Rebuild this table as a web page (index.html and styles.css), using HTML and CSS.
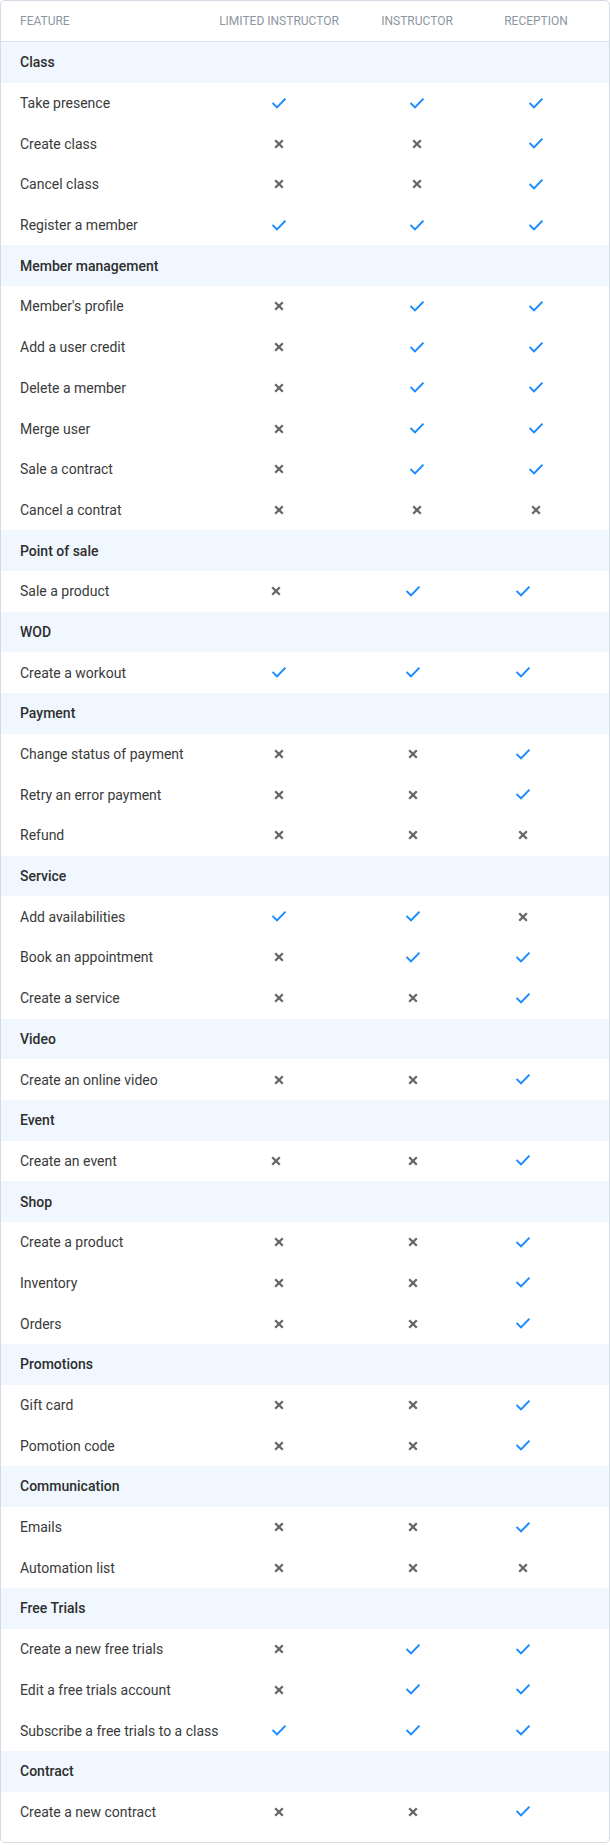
FILE: index.html
```html
<!DOCTYPE html>
<html lang="en">
<head>
<meta charset="utf-8">
<title>Permissions</title>
<link rel="stylesheet" href="styles.css">
</head>
<body>
<svg class="defs" width="0" height="0" aria-hidden="true">
  <symbol id="i-yes" viewBox="0 0 14 11"><path d="M1.2 5.6 L5 9.4 L12.8 1.4" fill="none" stroke="currentColor" stroke-width="2" stroke-linecap="square" stroke-linejoin="miter"/></symbol>
  <symbol id="i-no" viewBox="0 0 10 10"><path d="M1.2 1.2 L8.8 8.8 M8.8 1.2 L1.2 8.8" fill="none" stroke="currentColor" stroke-width="2.3"/></symbol>
</svg>
<div class="perm">
  <div class="row row--head grid-a">
    <span class="feature">Feature</span>
    <span class="cell">Limited instructor</span>
    <span class="cell">Instructor</span>
    <span class="cell">Reception</span>
  </div>

  <div class="group grid-a">
    <div class="band">Class</div>
    <div class="row"><span class="feature">Take presence</span><span class="cell"><svg class="ic yes"><use href="#i-yes"/></svg></span><span class="cell"><svg class="ic yes"><use href="#i-yes"/></svg></span><span class="cell"><svg class="ic yes"><use href="#i-yes"/></svg></span></div>
    <div class="row"><span class="feature">Create class</span><span class="cell"><svg class="ic no"><use href="#i-no"/></svg></span><span class="cell"><svg class="ic no"><use href="#i-no"/></svg></span><span class="cell"><svg class="ic yes"><use href="#i-yes"/></svg></span></div>
    <div class="row"><span class="feature">Cancel class</span><span class="cell"><svg class="ic no"><use href="#i-no"/></svg></span><span class="cell"><svg class="ic no"><use href="#i-no"/></svg></span><span class="cell"><svg class="ic yes"><use href="#i-yes"/></svg></span></div>
    <div class="row"><span class="feature">Register a member</span><span class="cell"><svg class="ic yes"><use href="#i-yes"/></svg></span><span class="cell"><svg class="ic yes"><use href="#i-yes"/></svg></span><span class="cell"><svg class="ic yes"><use href="#i-yes"/></svg></span></div>
  </div>

  <div class="group grid-a">
    <div class="band">Member management</div>
    <div class="row"><span class="feature">Member's profile</span><span class="cell"><svg class="ic no"><use href="#i-no"/></svg></span><span class="cell"><svg class="ic yes"><use href="#i-yes"/></svg></span><span class="cell"><svg class="ic yes"><use href="#i-yes"/></svg></span></div>
    <div class="row"><span class="feature">Add a user credit</span><span class="cell"><svg class="ic no"><use href="#i-no"/></svg></span><span class="cell"><svg class="ic yes"><use href="#i-yes"/></svg></span><span class="cell"><svg class="ic yes"><use href="#i-yes"/></svg></span></div>
    <div class="row"><span class="feature">Delete a member</span><span class="cell"><svg class="ic no"><use href="#i-no"/></svg></span><span class="cell"><svg class="ic yes"><use href="#i-yes"/></svg></span><span class="cell"><svg class="ic yes"><use href="#i-yes"/></svg></span></div>
    <div class="row"><span class="feature">Merge user</span><span class="cell"><svg class="ic no"><use href="#i-no"/></svg></span><span class="cell"><svg class="ic yes"><use href="#i-yes"/></svg></span><span class="cell"><svg class="ic yes"><use href="#i-yes"/></svg></span></div>
    <div class="row"><span class="feature">Sale a contract</span><span class="cell"><svg class="ic no"><use href="#i-no"/></svg></span><span class="cell"><svg class="ic yes"><use href="#i-yes"/></svg></span><span class="cell"><svg class="ic yes"><use href="#i-yes"/></svg></span></div>
    <div class="row"><span class="feature">Cancel a contrat</span><span class="cell"><svg class="ic no"><use href="#i-no"/></svg></span><span class="cell"><svg class="ic no"><use href="#i-no"/></svg></span><span class="cell"><svg class="ic no"><use href="#i-no"/></svg></span></div>
  </div>

  <div class="group grid-b">
    <div class="band">Point of sale</div>
    <div class="row"><span class="feature">Sale a product</span><span class="cell"><svg class="ic no shift"><use href="#i-no"/></svg></span><span class="cell"><svg class="ic yes"><use href="#i-yes"/></svg></span><span class="cell"><svg class="ic yes"><use href="#i-yes"/></svg></span></div>
  </div>

  <div class="group grid-b">
    <div class="band">WOD</div>
    <div class="row"><span class="feature">Create a workout</span><span class="cell"><svg class="ic yes"><use href="#i-yes"/></svg></span><span class="cell"><svg class="ic yes"><use href="#i-yes"/></svg></span><span class="cell"><svg class="ic yes"><use href="#i-yes"/></svg></span></div>
  </div>

  <div class="group grid-b">
    <div class="band">Payment</div>
    <div class="row"><span class="feature">Change status of payment</span><span class="cell"><svg class="ic no"><use href="#i-no"/></svg></span><span class="cell"><svg class="ic no"><use href="#i-no"/></svg></span><span class="cell"><svg class="ic yes"><use href="#i-yes"/></svg></span></div>
    <div class="row"><span class="feature">Retry an error payment</span><span class="cell"><svg class="ic no"><use href="#i-no"/></svg></span><span class="cell"><svg class="ic no"><use href="#i-no"/></svg></span><span class="cell"><svg class="ic yes"><use href="#i-yes"/></svg></span></div>
    <div class="row"><span class="feature">Refund</span><span class="cell"><svg class="ic no"><use href="#i-no"/></svg></span><span class="cell"><svg class="ic no"><use href="#i-no"/></svg></span><span class="cell"><svg class="ic no"><use href="#i-no"/></svg></span></div>
  </div>

  <div class="group grid-b">
    <div class="band">Service</div>
    <div class="row"><span class="feature">Add availabilities</span><span class="cell"><svg class="ic yes"><use href="#i-yes"/></svg></span><span class="cell"><svg class="ic yes"><use href="#i-yes"/></svg></span><span class="cell"><svg class="ic no"><use href="#i-no"/></svg></span></div>
    <div class="row"><span class="feature">Book an appointment</span><span class="cell"><svg class="ic no"><use href="#i-no"/></svg></span><span class="cell"><svg class="ic yes"><use href="#i-yes"/></svg></span><span class="cell"><svg class="ic yes"><use href="#i-yes"/></svg></span></div>
    <div class="row"><span class="feature">Create a service</span><span class="cell"><svg class="ic no"><use href="#i-no"/></svg></span><span class="cell"><svg class="ic no"><use href="#i-no"/></svg></span><span class="cell"><svg class="ic yes"><use href="#i-yes"/></svg></span></div>
  </div>

  <div class="group grid-b">
    <div class="band">Video</div>
    <div class="row"><span class="feature">Create an online video</span><span class="cell"><svg class="ic no"><use href="#i-no"/></svg></span><span class="cell"><svg class="ic no"><use href="#i-no"/></svg></span><span class="cell"><svg class="ic yes"><use href="#i-yes"/></svg></span></div>
  </div>

  <div class="group grid-b">
    <div class="band">Event</div>
    <div class="row"><span class="feature">Create an event</span><span class="cell"><svg class="ic no shift"><use href="#i-no"/></svg></span><span class="cell"><svg class="ic no"><use href="#i-no"/></svg></span><span class="cell"><svg class="ic yes"><use href="#i-yes"/></svg></span></div>
  </div>

  <div class="group grid-b">
    <div class="band">Shop</div>
    <div class="row"><span class="feature">Create a product</span><span class="cell"><svg class="ic no"><use href="#i-no"/></svg></span><span class="cell"><svg class="ic no"><use href="#i-no"/></svg></span><span class="cell"><svg class="ic yes"><use href="#i-yes"/></svg></span></div>
    <div class="row"><span class="feature">Inventory</span><span class="cell"><svg class="ic no"><use href="#i-no"/></svg></span><span class="cell"><svg class="ic no"><use href="#i-no"/></svg></span><span class="cell"><svg class="ic yes"><use href="#i-yes"/></svg></span></div>
    <div class="row"><span class="feature">Orders</span><span class="cell"><svg class="ic no"><use href="#i-no"/></svg></span><span class="cell"><svg class="ic no"><use href="#i-no"/></svg></span><span class="cell"><svg class="ic yes"><use href="#i-yes"/></svg></span></div>
  </div>

  <div class="group grid-b">
    <div class="band">Promotions</div>
    <div class="row"><span class="feature">Gift card</span><span class="cell"><svg class="ic no"><use href="#i-no"/></svg></span><span class="cell"><svg class="ic no"><use href="#i-no"/></svg></span><span class="cell"><svg class="ic yes"><use href="#i-yes"/></svg></span></div>
    <div class="row"><span class="feature">Pomotion code</span><span class="cell"><svg class="ic no"><use href="#i-no"/></svg></span><span class="cell"><svg class="ic no"><use href="#i-no"/></svg></span><span class="cell"><svg class="ic yes"><use href="#i-yes"/></svg></span></div>
  </div>

  <div class="group grid-b">
    <div class="band">Communication</div>
    <div class="row"><span class="feature">Emails</span><span class="cell"><svg class="ic no"><use href="#i-no"/></svg></span><span class="cell"><svg class="ic no"><use href="#i-no"/></svg></span><span class="cell"><svg class="ic yes"><use href="#i-yes"/></svg></span></div>
    <div class="row"><span class="feature">Automation list</span><span class="cell"><svg class="ic no"><use href="#i-no"/></svg></span><span class="cell"><svg class="ic no"><use href="#i-no"/></svg></span><span class="cell"><svg class="ic no"><use href="#i-no"/></svg></span></div>
  </div>

  <div class="group grid-b">
    <div class="band">Free Trials</div>
    <div class="row"><span class="feature">Create a new free trials</span><span class="cell"><svg class="ic no"><use href="#i-no"/></svg></span><span class="cell"><svg class="ic yes"><use href="#i-yes"/></svg></span><span class="cell"><svg class="ic yes"><use href="#i-yes"/></svg></span></div>
    <div class="row"><span class="feature">Edit a free trials account</span><span class="cell"><svg class="ic no"><use href="#i-no"/></svg></span><span class="cell"><svg class="ic yes"><use href="#i-yes"/></svg></span><span class="cell"><svg class="ic yes"><use href="#i-yes"/></svg></span></div>
    <div class="row"><span class="feature">Subscribe a free trials to a class</span><span class="cell"><svg class="ic yes"><use href="#i-yes"/></svg></span><span class="cell"><svg class="ic yes"><use href="#i-yes"/></svg></span><span class="cell"><svg class="ic yes"><use href="#i-yes"/></svg></span></div>
  </div>

  <div class="group grid-b">
    <div class="band">Contract</div>
    <div class="row"><span class="feature">Create a new contract</span><span class="cell"><svg class="ic no"><use href="#i-no"/></svg></span><span class="cell"><svg class="ic no"><use href="#i-no"/></svg></span><span class="cell"><svg class="ic yes"><use href="#i-yes"/></svg></span></div>
  </div>
</div>
</body>
</html>
```

FILE: styles.css
```css
* { box-sizing: border-box; }

html, body {
  margin: 0;
  padding: 0;
  background: #ffffff;
}

body {
  font-family: Roboto, "Noto Sans", Arial, sans-serif;
  color: #3a3a3a;
  font-size: 14px;
}

.defs {
  position: absolute;
  width: 0;
  height: 0;
  overflow: hidden;
}

.perm {
  width: 610px;
  border: 1px solid #d3dbe4;
  border-radius: 5px;
  overflow: hidden;
  background: #ffffff;
  padding-bottom: 10px;
}

.row {
  display: grid;
  align-items: center;
  height: 40.7px;
}

.grid-a .row,
.row.grid-a {
  grid-template-columns: 217px 122px 154px 84px 1fr;
}

.grid-b .row {
  grid-template-columns: 217px 122px 146px 74px 1fr;
}

.feature {
  padding-left: 19px;
  white-space: nowrap;
}

.cell {
  display: flex;
  justify-content: center;
  white-space: nowrap;
}

.row--head {
  height: 41px;
  border-bottom: 1px solid #dde3ea;
  font-size: 12px;
  color: #8d96a0;
  text-transform: uppercase;
  letter-spacing: 0;
}

.band {
  height: 40.7px;
  display: flex;
  align-items: center;
  padding-left: 19px;
  background: #f0f7fe;
  font-weight: 500;
  color: #2e2e2e;
}

.ic {
  display: block;
}

.yes {
  width: 14px;
  height: 11px;
  color: #1a8bff;
}

.no {
  width: 10px;
  height: 10px;
  color: #666666;
}

.no.shift {
  margin-right: 6px;
}
```
